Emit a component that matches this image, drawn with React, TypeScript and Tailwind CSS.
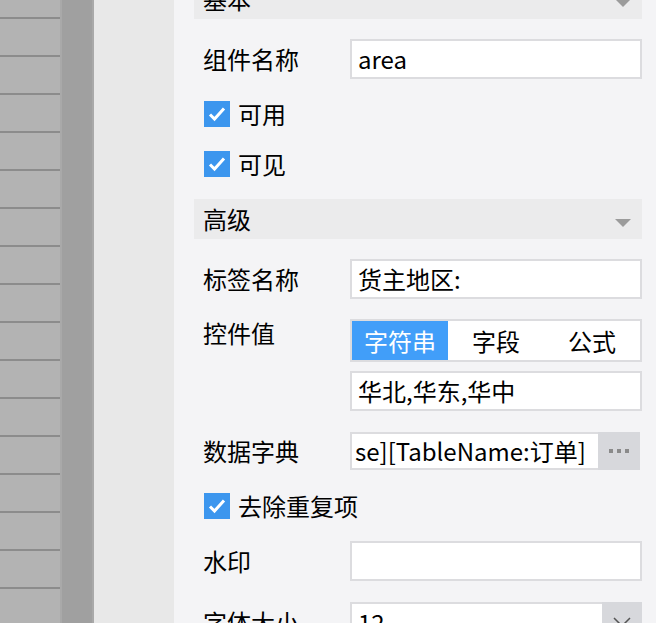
import type { ReactNode } from 'react';

const Caret = () => (
  <svg width="16" height="8" viewBox="0 0 16 8" className="shrink-0">
    <polygon points="0,0 16,0 8,8" fill="#9b9b9b" />
  </svg>
);

const Check = () => (
  <div className="w-[26px] h-[26px] bg-[#3c96ee] flex items-center justify-center shrink-0">
    <svg width="26" height="26" viewBox="0 0 26 26">
      <path d="M6 13.5 L10.5 18 L20 7.5" stroke="#fff" strokeWidth="3" fill="none" />
    </svg>
  </div>
);

const Section = ({ title, className }: { title: string; className: string }) => (
  <div className={`h-[40px] shrink-0 bg-[#ebebec] flex items-center justify-between pl-[9px] pr-[11px] ${className}`}>
    <span className="text-[24px] leading-none">{title}</span>
    <span className="mt-[8px]">
      <Caret />
    </span>
  </div>
);

const Row = ({ label, children, className }: { label: string; children: ReactNode; className: string }) => (
  <div className={`flex items-center shrink-0 ${className}`}>
    <div className="w-[156px] shrink-0 pl-[9px] text-[24px] leading-none">{label}</div>
    {children}
  </div>
);

const CheckRow = ({ label, className }: { label: string; className: string }) => (
  <div className={`flex items-center gap-[8px] pl-[10px] h-[26px] shrink-0 ${className}`}>
    <Check />
    <span className="text-[24px] leading-none">{label}</span>
  </div>
);

const Input = ({ value }: { value?: string }) => (
  <div className="flex-1 h-full border-2 border-[#dcdcdf] bg-white pl-[6px] flex items-center text-[24px] leading-none overflow-hidden whitespace-nowrap">
    {value}
  </div>
);

export default function App() {
  return (
    <div className="flex w-[656px] h-[623px] overflow-hidden text-black font-['Noto_Sans_CJK_SC','Noto_Sans',sans-serif]">
      {/* left ruler */}
      <div className="w-[60px] shrink-0 bg-[#b3b3b3] flex flex-col">
        <div className="h-[17px] shrink-0" />
        {Array.from({ length: 17 }).map((_, i) => (
          <div key={i} className="h-[38px] shrink-0 border-t-2 border-[#8c8c8c]" />
        ))}
      </div>
      <div className="w-[2px] shrink-0 bg-[#a9a9a9]" />
      <div className="w-[30px] shrink-0 bg-[#a0a0a0]" />
      <div className="w-[2px] shrink-0 bg-[#a9a9a9]" />
      <div className="w-[80px] shrink-0 bg-[#e8e8e8]" />

      {/* property panel */}
      <div className="flex-1 bg-[#f4f4f6] pl-[20px] pr-[14px] flex flex-col">
        <Section title="基本" className="-mt-[21px]" />

        <Row label="组件名称" className="mt-[20px] h-[40px]">
          <Input value="area" />
        </Row>

        <CheckRow label="可用" className="mt-[22px]" />
        <CheckRow label="可见" className="mt-[24px]" />

        <Section title="高级" className="mt-[22px]" />

        <Row label="标签名称" className="mt-[20px] h-[40px]">
          <Input value="货主地区:" />
        </Row>

        <div className="mt-[20px] flex items-start shrink-0">
          <div className="w-[156px] shrink-0 pl-[9px] pt-[2px] text-[24px] leading-none">控件值</div>
          <div className="flex-1 flex flex-col">
            <div className="h-[43px] border-2 border-[#dcdcdf] bg-white flex text-[24px] leading-none">
              <div className="w-[96px] bg-[#419ef9] text-white flex items-center justify-center">字符串</div>
              <div className="w-[96px] flex items-center justify-center">字段</div>
              <div className="w-[96px] flex items-center justify-center">公式</div>
            </div>
            <div className="h-[40px] mt-[9px] flex">
              <Input value="华北,华东,华中" />
            </div>
          </div>
        </div>

        <Row label="数据字典" className="mt-[21px] h-[38px]">
          <div className="flex h-full w-[290px]">
            <div className="flex-1 min-w-0 border-2 border-r-0 border-[#dcdcdf] bg-white pl-[3px] flex items-center text-[24px] leading-none overflow-hidden whitespace-nowrap">
              se][TableName:订单]
            </div>
            <div className="w-[42px] shrink-0 bg-[#d7d8dc] flex items-center justify-center gap-[4px]">
              <span className="w-[4px] h-[4px] bg-[#8a8a8a]" />
              <span className="w-[4px] h-[4px] bg-[#8a8a8a]" />
              <span className="w-[4px] h-[4px] bg-[#8a8a8a]" />
            </div>
          </div>
        </Row>

        <CheckRow label="去除重复项" className="mt-[23px]" />

        <Row label="水印" className="mt-[22px] h-[40px]">
          <Input />
        </Row>

        <Row label="字体大小" className="mt-[21px] h-[40px]">
          <div className="flex h-full flex-1">
            <div className="flex-1 border-2 border-r-0 border-[#dcdcdf] bg-white pl-[6px] flex items-center text-[24px] leading-none">
              12
            </div>
            <div className="w-[40px] shrink-0 bg-[#d7d8dc] flex items-center justify-center">
              <svg width="18" height="10" viewBox="0 0 18 10">
                <path d="M1 1 L9 9 L17 1" stroke="#555" strokeWidth="1.5" fill="none" />
              </svg>
            </div>
          </div>
        </Row>
      </div>
    </div>
  );
}
